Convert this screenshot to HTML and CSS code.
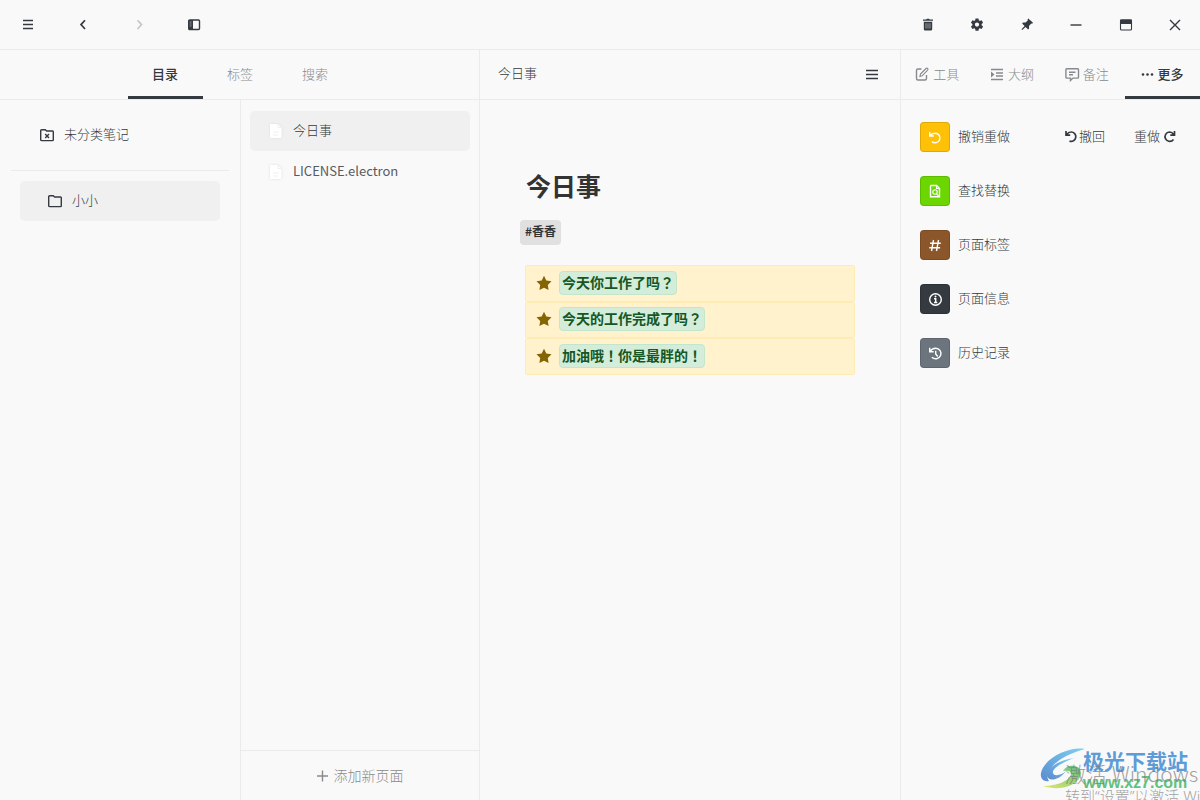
FILE: index.html
```html
<!DOCTYPE html>
<html lang="zh-CN">
<head>
<meta charset="utf-8">
<meta name="viewport" content="width=device-width, initial-scale=1">
<title>今日事</title>
<link rel="stylesheet" href="styles.css">
</head>
<body>
<header class="titlebar">
  <div class="nav-buttons">
    <button class="icon-button" aria-label="菜单"><svg class="icon" viewBox="0 0 16 16"><path class="line" d="M3 4.500h10M3 8.500h10M3 12.500h10"/></svg></button>
    <button class="icon-button" aria-label="后退"><svg class="icon" viewBox="0 0 16 16"><path class="line bold" d="M10 4.200L6 8.600l4 4.400"/></svg></button>
    <button class="icon-button" aria-label="前进" disabled><svg class="icon" viewBox="0 0 16 16"><path class="line bold" d="M6.500 4.200l4 4.400-4 4.400"/></svg></button>
    <button class="icon-button" aria-label="侧栏"><svg class="icon" viewBox="0 0 16 16"><rect class="line" x="2.700" y="4" width="10.800" height="9.500" rx="1"/><path d="M3 4h4v9.500H3z"/><path class="slots" d="M3.700 6h1.800M3.700 8h1.800M3.700 10h1.800"/></svg></button>
  </div>
  <div class="window-buttons">
    <button class="icon-button" aria-label="删除"><svg class="icon" viewBox="0 0 16 16"><path d="M3 3.500h3.200L7 2.700h2l.8.8H13v1.300H3zM3.800 5.700h8.400v7.300q0 1.500-1.300 1.500H5.100q-1.300 0-1.300-1.500z"/><path class="slots" d="M6 7.200v5.300M8 7.200v5.300M10 7.200v5.300"/></svg></button>
    <button class="icon-button" aria-label="设置"><svg class="icon" viewBox="-1 -2 26 26"><path d="M12,15.5A3.5,3.5 0 0,1 8.5,12A3.5,3.5 0 0,1 12,8.5A3.5,3.5 0 0,1 15.5,12A3.5,3.5 0 0,1 12,15.5M19.43,12.97C19.47,12.65 19.5,12.33 19.5,12C19.5,11.67 19.47,11.34 19.43,11L21.54,9.37C21.73,9.22 21.78,8.95 21.66,8.73L19.66,5.27C19.54,5.05 19.27,4.96 19.05,5.05L16.56,6.05C16.04,5.66 15.5,5.32 14.87,5.07L14.5,2.42C14.46,2.18 14.25,2 14,2H10C9.75,2 9.54,2.18 9.5,2.42L9.13,5.07C8.5,5.32 7.96,5.66 7.44,6.05L4.95,5.05C4.73,4.96 4.46,5.05 4.34,5.27L2.34,8.73C2.21,8.95 2.27,9.22 2.46,9.37L4.57,11C4.53,11.34 4.5,11.67 4.5,12C4.5,12.33 4.53,12.65 4.57,12.97L2.46,14.63C2.27,14.78 2.21,15.05 2.34,15.27L4.34,18.73C4.46,18.95 4.73,19.03 4.95,18.95L7.44,17.94C7.96,18.34 8.5,18.68 9.13,18.93L9.5,21.58C9.54,21.82 9.75,22 10,22H14C14.25,22 14.46,21.82 14.5,21.58L14.87,18.93C15.5,18.67 16.04,18.34 16.56,17.94L19.05,18.95C19.27,19.03 19.54,18.95 19.66,18.73L21.66,15.27C21.78,15.05 21.73,14.78 21.54,14.63L19.43,12.97Z"/></svg></button>
    <button class="icon-button" aria-label="置顶"><svg class="icon" viewBox="0 0 16 16"><path d="M9.300 2.500l4.700 4.300-.9.9-.8-.1-2.300 2.300.1 2.500-1 1-2.500-2.500L3.200 14l-.7-.7 3.100-3.400L3.100 7.400l1-1 2.500.1 2.300-2.300-.4-.8z"/></svg></button>
    <button class="icon-button" aria-label="最小化"><svg class="icon" viewBox="0 0 16 16"><path class="line" d="M2.500 9h11"/></svg></button>
    <button class="icon-button" aria-label="最大化"><svg class="icon" viewBox="0 0 16 16"><rect class="line thin" x="2.500" y="4" width="11" height="10" rx="1"/><path d="M2 4q0-.5.5-.5h11q.5 0 .5.5v4H2z"/></svg></button>
    <button class="icon-button" aria-label="关闭"><svg class="icon" viewBox="0 0 16 16"><path class="line" d="M3 4l10 10M13 4L3 14"/></svg></button>
  </div>
</header>

<div class="workspace">
  <aside class="sidebar">
    <nav class="tabs">
      <button class="tab active">目录</button>
      <button class="tab">标签</button>
      <button class="tab">搜索</button>
    </nav>
    <div class="browser">
      <section class="folders">
        <a class="folder root" href="#"><svg class="icon" viewBox="0 0 16 16"><path class="line" d="M1.700 3.700q0-1 1-1h3.500L7.700 4h5.800q.8 0 .8.8v8q0 .8-.8.8H2.600q-.9 0-.9-.9z"/><path class="line" d="M6.200 7.100l3.800 3.800M10 7.100l-3.800 3.800"/></svg><span class="label">未分类笔记</span></a>
        <hr class="rule">
        <a class="folder selected" href="#"><svg class="icon" viewBox="0 0 16 16"><path class="line" d="M1.700 3.700q0-1 1-1h3.500L7.700 4h5.800q.8 0 .8.8v8q0 .8-.8.8H2.600q-.9 0-.9-.9z"/></svg><span class="label">小小</span></a>
      </section>
      <section class="pages">
        <div class="page-list">
          <a class="page selected" href="#"><svg class="doc" viewBox="0 0 14 16"><path d="M2 1h7l3.500 3.500V14q0 1-1 1H2q-1 0-1-1V2q0-1 1-1z"/><path class="fold" d="M9 1v3.500h3.500M4 9h6M4 12h5"/></svg><span class="label">今日事</span></a>
          <a class="page" href="#"><svg class="doc" viewBox="0 0 14 16"><path d="M2 1h7l3.500 3.500V14q0 1-1 1H2q-1 0-1-1V2q0-1 1-1z"/><path class="fold" d="M9 1v3.500h3.500M4 9h6M4 12h5"/></svg><span class="label latin">LICENSE.electron</span></a>
        </div>
        <button class="add-page"><svg class="icon" viewBox="0 0 16 16"><path class="line" d="M8.500 2.500v11M3 8h11"/></svg><span class="label">添加新页面</span></button>
      </section>
    </div>
  </aside>

  <main class="editor">
    <div class="editor-bar">
      <span class="label">今日事</span>
      <button class="icon-button" aria-label="页面菜单"><svg class="icon" viewBox="0 0 16 16"><path class="line" d="M2 4.500h12M2 8.500h12M2 12.500h12"/></svg></button>
    </div>
    <article class="note">
      <h1 class="note-title">今日事</h1>
      <span class="hashtag">#香香</span>
      <ul class="tasks" lang="zh-Hant">
        <li class="task"><svg class="icon" viewBox="0 0 16 16"><path d="M8 .8l2.300 4.600 5.200.8-3.700 3.700.8 5.100L8 12.700 3.400 15l.8-5.100L.5 6.200l5.200-.8z"/></svg><mark class="mark">今天你工作了吗？</mark></li>
        <li class="task"><svg class="icon" viewBox="0 0 16 16"><path d="M8 .8l2.300 4.600 5.200.8-3.700 3.700.8 5.100L8 12.700 3.400 15l.8-5.100L.5 6.200l5.200-.8z"/></svg><mark class="mark">今天的工作完成了吗？</mark></li>
        <li class="task"><svg class="icon" viewBox="0 0 16 16"><path d="M8 .8l2.300 4.600 5.200.8-3.700 3.700.8 5.100L8 12.700 3.400 15l.8-5.100L.5 6.200l5.200-.8z"/></svg><mark class="mark">加油哦！你是最胖的！</mark></li>
      </ul>
    </article>
  </main>

  <aside class="inspector">
    <nav class="tabs">
      <button class="tab"><svg class="icon" viewBox="0 0 16 16"><path class="line" d="M7.500 3H4Q2.500 3 2.500 4.500v8Q2.500 14 4 14h7q1.500 0 1.500-1.500V9"/><path class="line thin" d="M6.500 8L12 2.500q.8-.7 1.600 0t0 1.600L8.200 9.800l-2.300.7z"/></svg><span>工具</span></button>
      <button class="tab"><svg class="icon" viewBox="0 0 16 16"><path class="line" d="M2 3.500h12M7 7h7M7 10h7M2 13.500h12"/><path d="M2 5.500l3.500 3L2 11.500z"/></svg><span>大纲</span></button>
      <button class="tab"><svg class="icon" viewBox="0 0 16 16"><path class="line" d="M2.700 2.700h11q.8 0 .8.800v7.800q0 .8-.8.8H9L6.500 14.500V12.100H2.700q-.8 0-.8-.8V3.500q0-.8.8-.8zM5 6.200h6.500M5 8.800h4"/></svg><span>备注</span></button>
      <button class="tab active"><svg class="icon" viewBox="0 0 16 16"><circle cx="4" cy="8.500" r="1.300"/><circle cx="8.500" cy="8.500" r="1.300"/><circle cx="13" cy="8.500" r="1.300"/></svg><span>更多</span></button>
    </nav>
    <ul class="tools">
      <li class="tool"><a class="tool-link" href="#"><span class="tile yellow"><svg class="icon" viewBox="0 0 16 16"><path class="line" d="M2.700 3v4h4M3 6.700q2-2.500 5.200-2.500a4.800 4.800 0 1 1-3.300 8.300"/></svg></span><span class="label">撤销重做</span></a>
        <span class="history-buttons">
          <button class="text-button"><svg class="icon" viewBox="0 0 16 16"><path class="line bold" d="M3 2v4.200h4.200M3.500 5.700Q5.500 3 8 3a4.700 4.700 0 1 1-1.500 9.100"/></svg><span class="label">撤回</span></button>
          <button class="text-button redo"><span class="label">重做</span><svg class="icon" viewBox="0 0 16 16"><path class="line bold" d="M13.500 2v4.200H9.300M13 5.700Q11 3 8.500 3a4.700 4.700 0 1 0 4 7.500"/></svg></button>
        </span></li>
      <li class="tool"><a class="tool-link" href="#"><span class="tile green"><svg class="icon" viewBox="0 0 16 16"><path class="line" d="M4 2.500h5.500L12.500 5.500v8.300H3.500V3z"/><circle class="line thin" cx="8" cy="9" r="2.200"/><path class="line thin" d="M9.500 10.800l3 3M9.500 2.500v3h3"/></svg></span><span class="label">查找替换</span></a></li>
      <li class="tool"><a class="tool-link" href="#"><span class="tile brown"><svg class="icon" viewBox="0 0 16 16"><path class="line" d="M6.500 3L4.500 14M11.500 3l-2 11M3 6.300h10.800M2.300 10.700h10.800"/></svg></span><span class="label">页面标签</span></a></li>
      <li class="tool"><a class="tool-link" href="#"><span class="tile dark"><svg class="icon" viewBox="0 0 16 16"><circle class="line" cx="8.500" cy="8.500" r="5.800"/><path class="line" d="M7 7.800h1.700v3.500M7 11.500h3.300"/><circle cx="8.500" cy="5.400" r="1"/></svg></span><span class="label">页面信息</span></a></li>
      <li class="tool"><a class="tool-link" href="#"><span class="tile gray"><svg class="icon" viewBox="0 0 16 16"><path class="line" d="M2.700 2.800v3.900h4M3 6.500Q5 3.200 8.700 3.200a5.300 5.300 0 1 1-3.800 9M8.700 5.800v3.200l2 2.500"/></svg></span><span class="label">历史记录</span></a></li>
    </ul>
  </aside>
</div>

<div class="watermark">
  <svg class="swirl" viewBox="0 0 46 42">
    <defs>
      <linearGradient id="sky" x1="1" y1="0" x2="0" y2="1"><stop offset="0" stop-color="#6fcdf2"/><stop offset="1" stop-color="#4a80cc"/></linearGradient>
      <linearGradient id="leaf" x1="0" y1="1" x2="1" y2="0"><stop offset="0" stop-color="#e0e85a"/><stop offset="1" stop-color="#4db878"/></linearGradient>
    </defs>
    <path fill="url(#sky)" d="M45 1C27-2 3 12 1 25c-1 6 3 9 8 8C3 25 15 9 45 1z"/>
    <path fill="url(#sky)" d="M34 10C20 12 7 19 7 27c0 7 12 6 19-4-4 4-12 6-13 2-1-4 6-9 21-15z"/>
    <path fill="url(#leaf)" d="M30 18c8-1 13 4 10 11C35 39 17 43 3 38c13 0 27-5 28-12 0-3-3-4-8-3 2-3 4-5 7-5z"/>
  </svg>
  <div class="brand"><span class="brand-name">极光下载站</span><span class="brand-url">www.xz7.com</span></div>
  <div class="activation"><span class="activation-title">激活 Windows</span><span class="activation-hint">转到“设置”以激活 Windows。</span></div>
</div>
</body>
</html>
```

FILE: styles.css
```css
* { box-sizing: border-box; }

body {
  margin: 0;
  height: 100vh;
  display: flex;
  flex-direction: column;
  overflow: hidden;
  position: relative;
  background: #f9f9f9;
  color: #343a40;
  font-family: "Noto Sans CJK SC", sans-serif;
  font-size: 13px;
  font-weight: 300;
  line-height: 20px;
}

button {
  border: 0;
  padding: 0;
  background: none;
  color: inherit;
  font: inherit;
}

a { color: inherit; text-decoration: none; }
ul { list-style: none; margin: 0; padding: 0; }

.icon { width: 16px; height: 16px; flex: none; fill: currentColor; }
.line { fill: none; stroke: currentColor; stroke-width: 1.4; }
.thin { stroke-width: 1.1; }
.bold { stroke-width: 1.7; }
.slots { fill: none; stroke: #a3a7aa; stroke-width: 0.9; }
.label { padding-bottom: 2px; }
.latin { font-weight: 400; color: #565b60; }

.titlebar {
  display: flex;
  justify-content: space-between;
  flex: none;
  height: 50px;
  padding-bottom: 1px;
  border-bottom: 1px solid #ebebeb;
}
.nav-buttons { display: flex; width: 222px; }
.window-buttons { display: flex; width: 297px; }
.icon-button {
  flex: 1;
  display: flex;
  align-items: center;
  justify-content: center;
}
.icon-button:disabled { color: #c4c6c8; }

.workspace { flex: 1; display: flex; min-height: 0; }

.sidebar {
  width: 480px;
  flex: none;
  display: flex;
  flex-direction: column;
  border-right: 1px solid #ebebeb;
}
.tabs {
  display: flex;
  flex: none;
  justify-content: center;
  height: 50px;
  border-bottom: 1px solid #ebebeb;
}
.sidebar .tabs { padding-left: 1px; }
.tab {
  width: 75px;
  display: flex;
  align-items: center;
  justify-content: center;
  gap: 3px;
  padding-bottom: 2px;
  border-top: 3px solid transparent;
  border-bottom: 3px solid transparent;
  color: #868a8e;
}
.inspector .tab { padding-right: 3px; }
.tab.active { border-bottom-color: #343a40; color: #343a40; font-weight: 500; }

.browser { flex: 1; display: flex; min-height: 0; }
.folders { width: 240px; flex: none; padding: 15px 11px; }
.folder {
  display: flex;
  align-items: center;
  gap: 9px;
  height: 40px;
  margin: 0 9px;
  padding-left: 27px;
  border-radius: 5px;
}
.folder.root { padding-left: 19px; }
.rule { margin: 15px 0 10px; border: 0; border-top: 1px solid #ebebeb; }
.selected { background: #f0f0f0; }

.pages {
  flex: 1;
  display: flex;
  flex-direction: column;
  border-left: 1px solid #ebebeb;
}
.page-list { flex: 1; display: grid; align-content: start; gap: 1px; padding: 11px 9px; }
.page {
  display: flex;
  align-items: center;
  gap: 10px;
  height: 40px;
  padding-left: 19px;
  border-radius: 5px;
}
.doc { width: 14px; height: 16px; fill: #fff; filter: drop-shadow(0 0 1px #dcdcdc); }
.doc .fold { fill: none; stroke: #f0f0f0; }
.add-page {
  display: flex;
  align-items: center;
  justify-content: center;
  gap: 4px;
  height: 50px;
  padding-right: 3px;
  border-top: 1px solid #ebebeb;
  color: #8b8b8b;
  font-size: 14px;
}

.editor { flex: 1; min-width: 0; }
.editor-bar {
  display: flex;
  align-items: center;
  justify-content: space-between;
  height: 50px;
  padding: 0 20px 1px 18px;
  border-bottom: 1px solid #ebebeb;
}
.editor-bar .icon-button { flex: none; }
.note { padding: 65px 45px 0; color: #333; }
.note-title { margin: 0 1px; font-size: 25px; line-height: 40px; font-weight: 700; }
.hashtag {
  display: inline-block;
  margin: 15px 0 20px -5px;
  padding: 0 5px 3px;
  border-radius: 4px;
  background: #e0e0e0;
  font-size: 12px;
  line-height: 22px;
  font-weight: 700;
  vertical-align: top;
}
.tasks { display: grid; grid-auto-rows: 1fr; min-height: 110px; }
.task {
  display: flex;
  align-items: center;
  gap: 7px;
  padding: 0 10px 1px;
  border: 1px solid #ffecb5;
  border-radius: 2px;
  background: #fff2cd;
  color: #856404;
}
.mark {
  padding: 0 2px 2px;
  border: 1px solid #c3e6cb;
  border-radius: 4px;
  background: #d4edda;
  color: #155724;
  font-family: "Noto Sans CJK TC", sans-serif;
  font-size: 14px;
  line-height: 20px;
  font-weight: 700;
}

.inspector { width: 300px; flex: none; border-left: 1px solid #ebebeb; }
.tools { display: grid; gap: 24px; padding: 22px 23px 0 19px; }
.tool { display: flex; justify-content: space-between; align-items: center; }
.tool-link { display: flex; align-items: center; gap: 8px; }
.tile {
  display: flex;
  align-items: center;
  justify-content: center;
  width: 30px;
  height: 30px;
  border: 1px solid rgba(0, 0, 0, 0.12);
  border-radius: 4px;
  color: #fff;
}
.yellow { background: #ffc107; }
.green { background: #6bd600; }
.brown { background: #8b572a; }
.dark { background: #343a40; }
.gray { background: #6c757d; }
.history-buttons { display: flex; gap: 29px; }
.text-button { display: flex; align-items: center; }
.redo { gap: 1px; }

.watermark {
  position: absolute;
  right: 0;
  bottom: 0;
  width: 160px;
  height: 52px;
  overflow: hidden;
  display: flex;
  pointer-events: none;
}
.swirl { width: 46px; height: 42px; flex: none; opacity: 0.9; }
.brand { display: flex; flex-direction: column; margin-left: -3px; font-weight: 700; }
.brand-name { color: #5c9cd8; font-size: 21px; line-height: 24px; }
.brand-url {
  color: #62c17e;
  font-family: "Liberation Sans", Arial, sans-serif;
  font-size: 16px;
  line-height: 22px;
}
.activation {
  position: absolute;
  left: 25px;
  top: 12px;
  display: flex;
  flex-direction: column;
  color: rgba(120, 120, 120, 0.7);
  white-space: nowrap;
}
.activation-title { font-size: 21px; line-height: 26px; }
.activation-hint {
  font-family: "Noto Sans", "Noto Sans CJK SC", sans-serif;
  font-size: 15px;
  line-height: 20px;
}
```
